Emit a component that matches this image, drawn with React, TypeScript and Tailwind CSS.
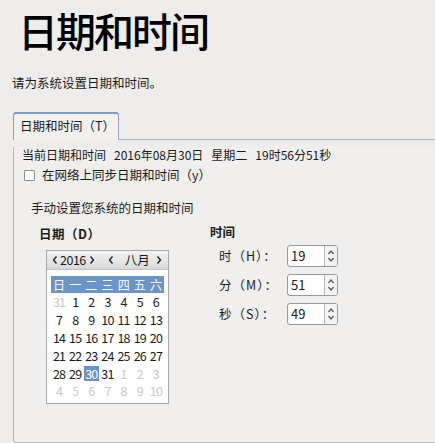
const font = { fontFamily: '"Noto Sans CJK SC", "Noto Sans", sans-serif' }

const weeks: [number, boolean][][] = [
  [[31, false], [1, true], [2, true], [3, true], [4, true], [5, true], [6, true]],
  [[7, true], [8, true], [9, true], [10, true], [11, true], [12, true], [13, true]],
  [[14, true], [15, true], [16, true], [17, true], [18, true], [19, true], [20, true]],
  [[21, true], [22, true], [23, true], [24, true], [25, true], [26, true], [27, true]],
  [[28, true], [29, true], [30, true], [31, true], [1, false], [2, false], [3, false]],
  [[4, false], [5, false], [6, false], [7, false], [8, false], [9, false], [10, false]],
]

function Spin({ value }: { value: string }) {
  return (
    <div className="flex h-[22px] w-[51px] border border-[#9a9a9a] rounded-[3px] bg-white overflow-hidden">
      <div className="flex-1 pl-[3px] text-[13px] leading-[20px] text-[#222]">{value}</div>
      <div className="w-[13px] border-l border-[#b5b5b5] bg-[#f4f4f4] flex flex-col items-center justify-center text-[#555]">
        <svg width="8" height="16" viewBox="0 0 8 16" fill="none" stroke="#555" strokeWidth="1.2">
          <path d="M1.5 6 L4 3 L6.5 6" />
          <path d="M1.5 10 L4 13 L6.5 10" />
        </svg>
      </div>
    </div>
  )
}

function Arrow({ dir }: { dir: "l" | "r" }) {
  return (
    <svg width="6" height="10" viewBox="0 0 6 10" fill="none" stroke="#222" strokeWidth="1.4">
      <path d={dir === "l" ? "M4.5 1.5 L1.5 5 L4.5 8.5" : "M1.5 1.5 L4.5 5 L1.5 8.5"} />
    </svg>
  )
}

export default function App() {
  return (
    <div className="w-[435px] h-[443px] bg-[#eeedeb] overflow-hidden text-[#1a1a1a]" style={font}>
      <h1 className="pl-[18px] pt-[6px] text-[40px] leading-[48px] font-medium tracking-[-2px] text-black">日期和时间</h1>
      <p className="pl-[12px] mt-[21px] text-[12.5px] leading-[16px]">请为系统设置日期和时间。</p>

      <div className="ml-[13px] mt-[21px] w-[440px]">
        <div className="flex">
          <div className="w-[106px] h-[28px] rounded-t-[3px] border border-b-0 border-[#8fa3bf] border-t-2 border-t-[#7f9cc4] bg-[#f2f1ef] pl-[6px] text-[12.5px] leading-[24px]">
            日期和时间（T）
          </div>
          <div className="flex-1 border-b border-[#b4b4b4]" />
        </div>
        <div className="h-[296px] border-l border-b border-[#b4b4b4] rounded-bl-[3px] bg-[#f0efed] pl-[8px]">
          <div className="mt-[7px] text-[12px] leading-[16px] flex gap-[8px]">
            <span>当前日期和时间</span>
            <span>2016年08月30日</span>
            <span>星期二</span>
            <span>19时56分51秒</span>
          </div>
          <label className="mt-[4px] ml-[2px] flex items-center gap-[7px] text-[12.5px] leading-[16px]">
            <span className="w-[11px] h-[11px] border border-[#8a8a8a] bg-white rounded-[1px]" />
            在网络上同步日期和时间（y）
          </label>
          <div className="mt-[17px] ml-[9px] text-[12.5px] leading-[16px]">手动设置您系统的日期和时间</div>

          <div className="flex mt-[10px]">
            <div className="ml-[17px] w-[171px]">
              <div className="text-[12.5px] leading-[16px] font-bold tracking-[0.5px]">日期（D）</div>
              <div className="mt-[8px] ml-[7px] w-[123px] border border-[#a9a9a9] bg-white">
                <div className="h-[19px] bg-gradient-to-b from-[#f3f3f3] to-[#d9d9d9] border-b border-[#c4c4c4] flex items-center text-[12.5px] leading-[16px] pl-[5px] pr-[6px]">
                  <Arrow dir="l" />
                  <span className="ml-[2px] tracking-[-0.5px]">2016</span>
                  <span className="ml-[3px]"><Arrow dir="r" /></span>
                  <span className="ml-[13px]"><Arrow dir="l" /></span>
                  <span className="ml-[11px]">八月</span>
                  <span className="ml-auto"><Arrow dir="r" /></span>
                </div>
                <div className="mt-[6px] mx-[4px] h-[17px] bg-[#6b94c9] grid grid-cols-7 text-white text-[12px] leading-[17px] text-center">
                  {["日", "一", "二", "三", "四", "五", "六"].map((d) => (
                    <span key={d}>{d}</span>
                  ))}
                </div>
                <div className="mx-[4px] mb-[3px] text-[12.5px]">
                  {weeks.map((w, i) => (
                    <div key={i} className="grid grid-cols-7 h-[17.8px] items-center text-center tracking-[-0.8px]">
                      {w.map(([n, cur], j) => {
                        const sel = cur && n === 30
                        return (
                          <span
                            key={j}
                            className={
                              sel
                                ? "bg-[#6b94c9] text-white leading-[15px] mx-[0.5px]"
                                : cur
                                ? "text-[#1a1a1a] leading-[15px]"
                                : "text-[#c8c8c8] leading-[15px]"
                            }
                          >
                            {n}
                          </span>
                        )
                      })}
                    </div>
                  ))}
                </div>
              </div>
            </div>

            <div>
              <div className="-mt-[2px] text-[12.5px] leading-[16px] font-bold">时间</div>
              <div className="mt-[5px] flex flex-col gap-[7px]">
                {[
                  ["时（H）：", "19"],
                  ["分（M）：", "51"],
                  ["秒（S）：", "49"],
                ].map(([l, v]) => (
                  <div key={l} className="flex items-center">
                    <span className="w-[77px] pl-[9px] text-[12.5px] leading-[16px] tracking-[1px]">{l}</span>
                    <Spin value={v} />
                  </div>
                ))}
              </div>
            </div>
          </div>
        </div>
      </div>
    </div>
  )
}
